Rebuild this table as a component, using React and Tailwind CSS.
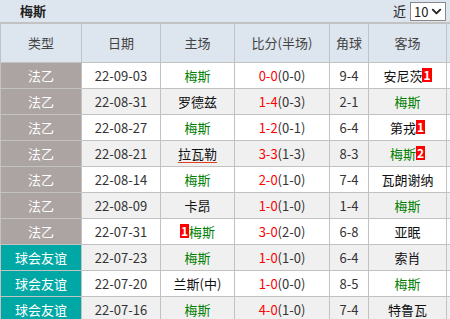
import { FiChevronDown } from "react-icons/fi";

const rows = [
  { type: "法乙", date: "22-09-03", home: "梅斯", hg: true, score: "0-0", half: "(0-0)", corner: "9-4", away: "安尼茨", badgeAway: "1" },
  { type: "法乙", date: "22-08-31", home: "罗德兹", score: "1-4", half: "(0-3)", corner: "2-1", away: "梅斯", ag: true },
  { type: "法乙", date: "22-08-27", home: "梅斯", hg: true, score: "1-2", half: "(0-1)", corner: "6-4", away: "第戎", badgeAway: "1" },
  { type: "法乙", date: "22-08-21", home: "拉瓦勒", underline: true, score: "3-3", half: "(1-3)", corner: "8-3", away: "梅斯", ag: true, badgeAway: "2" },
  { type: "法乙", date: "22-08-14", home: "梅斯", hg: true, score: "2-0", half: "(1-0)", corner: "7-4", away: "瓦朗谢纳" },
  { type: "法乙", date: "22-08-09", home: "卡昂", score: "1-0", half: "(1-0)", corner: "1-4", away: "梅斯", ag: true },
  { type: "法乙", date: "22-07-31", home: "梅斯", hg: true, badgeHome: "1", score: "3-0", half: "(2-0)", corner: "6-8", away: "亚眠" },
  { type: "球会友谊", date: "22-07-23", home: "梅斯", hg: true, score: "1-0", half: "(1-0)", corner: "6-4", away: "索肖" },
  { type: "球会友谊", date: "22-07-20", home: "兰斯(中)", score: "1-0", half: "(0-0)", corner: "8-5", away: "梅斯", ag: true },
  { type: "球会友谊", date: "22-07-16", home: "梅斯", hg: true, score: "4-0", half: "(1-0)", corner: "7-4", away: "特鲁瓦" },
];

const Badge = ({ n }) => (
  <span className="inline-block bg-[#ff0000] text-white font-bold text-[12px] leading-[14px] px-[1px] align-[1px]">{n}</span>
);

const App = () => {
  return (
    <div className="w-[450px] h-[319px] overflow-hidden bg-white font-['Noto_Sans_CJK_SC',sans-serif] text-[13px] text-[#333]">
      <div className="h-[23px] bg-[#dde5ee] border-b border-[#c2c2c2] flex items-center justify-between pl-[20px] pr-[4px]">
        <span className="font-bold text-[13px] text-[#222]">梅斯</span>
        <div className="flex items-center gap-[4px]">
          <span className="text-[13px] text-[#222]">近</span>
          <div className="w-[36px] h-[19px] bg-white border border-[#888] flex items-center justify-between pl-[3px] pr-[1px] text-[#222]">
            <span className="text-[13px] leading-none">10</span>
            <FiChevronDown className="w-[15px] h-[15px]" strokeWidth={3} />
          </div>
        </div>
      </div>
      <table className="border-collapse table-fixed w-[520px] text-center">
        <colgroup>
          <col className="w-[81px]" />
          <col className="w-[79px]" />
          <col className="w-[74px]" />
          <col className="w-[95px]" />
          <col className="w-[39px]" />
          <col className="w-[78px]" />
          <col className="w-[74px]" />
        </colgroup>
        <thead>
          <tr className="h-[39px] bg-[#dde5ee] text-[#444]">
            {["类型", "日期", "主场", "比分(半场)", "角球", "客场", ""].map((h, i) => (
              <th key={i} className="font-normal border border-[#c2c2c2] p-0">{h}</th>
            ))}
          </tr>
        </thead>
        <tbody>
          {rows.map((r, i) => (
            <tr key={i} className={`h-[26px] ${i % 2 === 0 ? "bg-white" : "bg-[#f0f0f0]"}`}>
              <td className={`border border-[#c2c2c2] p-0 text-white ${r.type === "法乙" ? "bg-[#aca4a2]" : "bg-[#00a8a5]"}`}>{r.type}</td>
              <td className="border border-[#c2c2c2] p-0">{r.date}</td>
              <td className={`border border-[#c2c2c2] p-0 ${r.hg ? "text-[#008000]" : "text-[#111]"}`}>
                {r.badgeHome && <Badge n={r.badgeHome} />}
                <span className={r.underline ? "underline decoration-[#e04020] underline-offset-[3px]" : ""}>{r.home}</span>
              </td>
              <td className="border border-[#c2c2c2] p-0">
                <span className="text-[#ff0000]">{r.score}</span>{r.half}
              </td>
              <td className="border border-[#c2c2c2] p-0">{r.corner}</td>
              <td className={`border border-[#c2c2c2] p-0 ${r.ag ? "text-[#008000]" : "text-[#111]"}`}>
                {r.away}
                {r.badgeAway && <Badge n={r.badgeAway} />}
              </td>
              <td className="border border-[#c2c2c2] p-0"></td>
            </tr>
          ))}
        </tbody>
      </table>
    </div>
  );
};

export default App;
